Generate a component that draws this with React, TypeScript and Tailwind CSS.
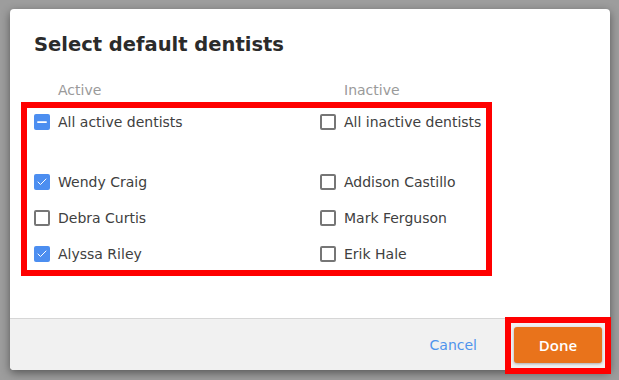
import { Check, Minus } from 'lucide-react';

type Dentist = { name: string; checked: boolean };

const ACTIVE: Dentist[] = [
  { name: 'Wendy Craig', checked: true },
  { name: 'Debra Curtis', checked: false },
  { name: 'Alyssa Riley', checked: true },
];

const INACTIVE: Dentist[] = [
  { name: 'Addison Castillo', checked: false },
  { name: 'Mark Ferguson', checked: false },
  { name: 'Erik Hale', checked: false },
];

function Box({ state }: { state: 'on' | 'off' | 'mixed' }) {
  if (state === 'off') {
    return <span className="w-4 h-4 shrink-0 rounded-[2px] border-2 border-[#767676] bg-white" />;
  }
  return (
    <span className="w-4 h-4 shrink-0 rounded-[2px] bg-[#4c8ef0] flex items-center justify-center text-white">
      {state === 'on' ? <Check className="w-3 h-3" strokeWidth={2} /> : <Minus className="w-3.5 h-3.5" strokeWidth={3} />}
    </span>
  );
}

function Row({ label, state }: { label: string; state: 'on' | 'off' | 'mixed' }) {
  return (
    <div className="h-9 flex items-center gap-2">
      <Box state={state} />
      <span className="text-[14px] text-[#404040]">{label}</span>
    </div>
  );
}

export default function App() {
  return (
    <div
      className="relative w-[619px] h-[380px] bg-[#9d9d9d] pt-[9px] pl-[10px] overflow-hidden"
      style={{ fontFamily: '"DejaVu Sans", "Open Sans", sans-serif' }}
    >
      <div className="w-[600px] h-[361px] bg-white rounded-[4px] shadow-[0_3px_10px_rgba(0,0,0,0.45)] flex flex-col overflow-hidden">
        {/* Body */}
        <div className="flex-1 px-6 pt-[22px]">
          <h1 className="text-[19.5px] leading-[28px] font-bold text-[#2b2b2b]">Select default dentists</h1>

          <div className="grid grid-cols-[286px_1fr] mt-[21px]">
            <div>
              <div className="h-5 pl-6 text-[14px] leading-5 text-[#9a9a9a]">Active</div>
              <div className="mt-1">
                <Row label="All active dentists" state="mixed" />
                <div className="h-6" />
                {ACTIVE.map(d => (
                  <Row key={d.name} label={d.name} state={d.checked ? 'on' : 'off'} />
                ))}
              </div>
            </div>
            <div>
              <div className="h-5 pl-6 text-[14px] leading-5 text-[#9a9a9a]">Inactive</div>
              <div className="mt-1">
                <Row label="All inactive dentists" state="off" />
                <div className="h-6" />
                {INACTIVE.map(d => (
                  <Row key={d.name} label={d.name} state={d.checked ? 'on' : 'off'} />
                ))}
              </div>
            </div>
          </div>
        </div>

        {/* Footer */}
        <div className="h-[52px] shrink-0 border-t border-[#d6d6d6] bg-[#f1f1f1] flex items-center justify-end pr-2 pt-[1px] gap-[37px]">
          <button className="text-[14px] text-[#4f94ec]">Cancel</button>
          <button
            className="w-[88px] h-9 rounded-[3px] bg-[#e9731b] text-white text-[15px] font-semibold shadow-[0_1px_3px_rgba(0,0,0,0.3)]"
            style={{ fontFamily: '"Open Sans", sans-serif' }}
          >
            Done
          </button>
        </div>
      </div>

      {/* annotation highlights */}
      <div className="pointer-events-none absolute left-[21px] top-[102px] w-[471px] h-[174px] border-[6px] border-[#ff0000]" />
      <div className="pointer-events-none absolute left-[505px] top-[317px] w-[106px] h-[57px] border-[6px] border-[#ff0000]" />
    </div>
  );
}
